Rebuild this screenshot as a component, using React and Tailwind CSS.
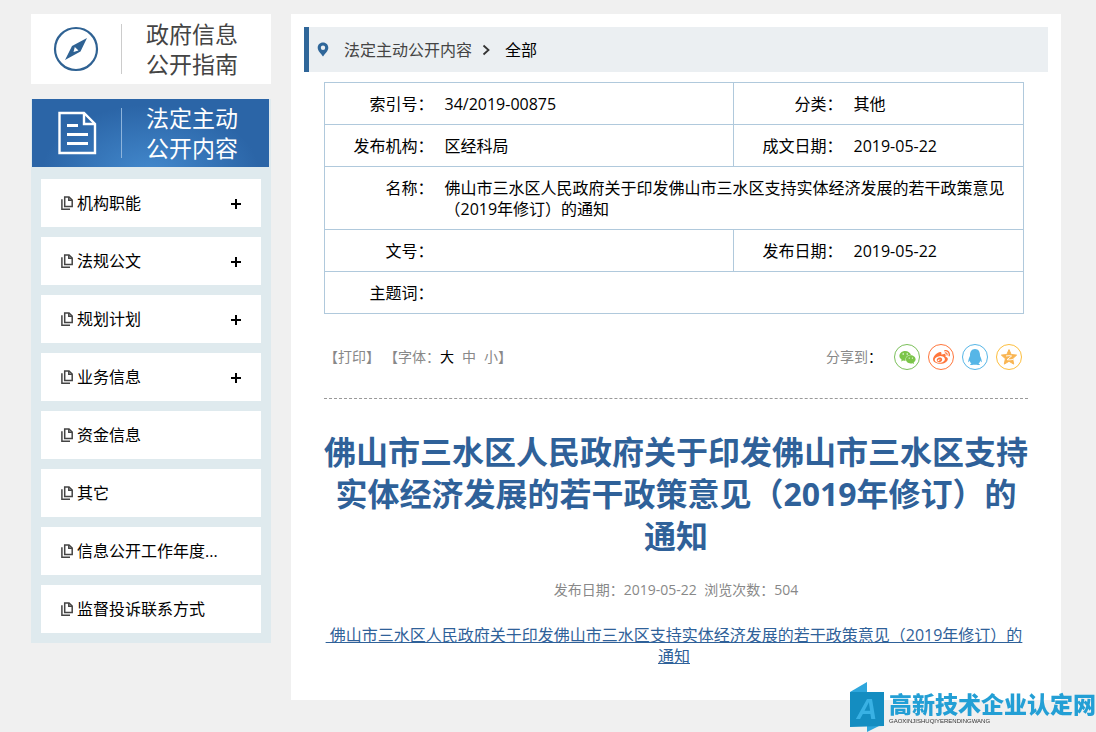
import React, { useState } from 'react';
import { FaWeibo, FaQq, FaWeixin } from 'react-icons/fa';

const MENU = [
  { label: '机构职能', expandable: true },
  { label: '法规公文', expandable: true },
  { label: '规划计划', expandable: true },
  { label: '业务信息', expandable: true },
  { label: '资金信息' },
  { label: '其它' },
  { label: '信息公开工作年度...' },
  { label: '监督投诉联系方式' }
];

const FONT_SIZES = ['大', '中', '小'];

const CompassIcon = () => (
  <svg viewBox="0 0 46 46" className="size-[46px]" fill="none" aria-hidden="true">
    <circle cx="23" cy="23" r="21" stroke="#2f6293" strokeWidth="2.2" />
    <path d="M34 12 L27.500 25.500 L12 34 L19 20 Z M21.800 21 L20.500 26 L25.500 24.500 Z" fill="#2f6293" fillRule="evenodd" />
  </svg>
);

const DocumentIcon = () => (
  <svg viewBox="0 0 40 44" className="h-11 w-10" fill="none" stroke="#fff" strokeWidth="2.4" aria-hidden="true">
    <path d="M2.500 2 H27 L38 13 V42 H2.500 Z" />
    <path d="M27 2 V13 H38" />
    <path d="M10 14.500 H21 M10 23.500 H31 M10 32.500 H31" strokeWidth="2.800" />
  </svg>
);

const FilesIcon = () => (
  <svg viewBox="0 0 12 14" className="h-[14px] w-3 shrink-0" fill="none" stroke="#444" strokeWidth="1.500" aria-hidden="true">
    <path d="M3.700 0.900 H8 L11.200 4 V10.600 H3.700 Z" />
    <path d="M7.800 1 V4.200 H11" />
    <path d="M0.900 3.200 V13.200 H9" />
  </svg>
);

const PinIcon = () => (
  <svg viewBox="0 0 12 15" className="h-[15px] w-3" aria-hidden="true">
    <path d="M6 0.500 C2.800 0.500 0.700 2.800 0.700 5.700 C0.700 9 4 11.500 6 14.500 C8 11.500 11.300 9 11.300 5.700 C11.300 2.800 9.200 0.500 6 0.500 Z M6 3.600 A2.200 2.200 0 1 1 6 8 A2.200 2.200 0 1 1 6 3.600 Z" fill="#2f6699" fillRule="evenodd" />
  </svg>
);

const QzoneIcon = () => (
  <svg viewBox="0 0 16 16" className="size-4" aria-hidden="true">
    <path d="M8 0.600 L10.200 5.500 L15.600 6.100 L11.600 9.700 L12.700 15.100 L8 12.300 L3.300 15.100 L4.400 9.700 L0.400 6.100 L5.800 5.500 Z" fill="#f9b552" stroke="#f9b552" strokeLinejoin="round" />
    <path d="M5 7 Q8 6.300 10.600 7 L6 10.700 Q9 11.200 12 10.400" fill="none" stroke="#fff" strokeWidth="0.900" />
  </svg>
);

const SideCard = ({ icon, lines, active }) => (
  <a
    href="#"
    className={
      active
        ? 'mr-[2px] ml-px flex h-[68px] items-center bg-[#2b65a7] bg-[radial-gradient(ellipse_at_50%_110%,#4389cd_0%,#2b65a7_65%)] text-white'
        : 'flex h-[70px] items-center bg-white pb-px text-[#444]'
    }
  >
    <span className={active ? 'flex w-[89px] justify-center' : 'flex w-[90px] justify-center'}>{icon}</span>
    <span className={active ? 'h-[50px] w-px bg-[#8db4dc]' : 'h-[50px] w-px bg-[#ccc]'} />
    <span className="flex-1 pl-6 text-[23px] leading-[30px]">
      {lines[0]}<br />{lines[1]}
    </span>
  </a>
);

const MenuItem = ({ label, expandable }) => (
  <li className="flex h-12 items-center bg-white px-5">
    <a href="#" className="flex flex-1 items-center gap-1 text-black">
      <FilesIcon />
      {label}
    </a>
    {expandable && (
      <button type="button" aria-label={`展开${label}`} className="cursor-pointer pt-[2px]">
        <svg viewBox="0 0 10 10" className="size-[10px]" stroke="#000" strokeWidth="2" aria-hidden="true">
          <path d="M5 0 V10 M0 5 H10" />
        </svg>
      </button>
    )}
  </li>
);

const Sidebar = () => (
  <aside className="w-60 shrink-0">
    <SideCard icon={<CompassIcon />} lines={['政府信息', '公开指南']} />
    <div className="mt-[15px] bg-[#dfeaee] pb-[10px]">
      <SideCard icon={<DocumentIcon />} lines={['法定主动', '公开内容']} active />
      <ul className="flex flex-col gap-[10px] px-[10px] pt-3">
        {MENU.map(item => <MenuItem key={item.label} {...item} />)}
      </ul>
    </div>
  </aside>
);

const Label = ({ children }) => (
  <th scope="row" className="pt-[11px] pr-[3px] pb-[9px] text-right align-top font-normal">{children}</th>
);

const Value = ({ children, colSpan, last }) => (
  <td colSpan={colSpan} className={last ? 'pt-[11px] pb-[9px] pl-2 align-top' : 'border-r border-[#b0c9dc] pt-[11px] pb-[9px] pl-2 align-top'}>
    {children}
  </td>
);

const InfoTable = () => (
  <table className="w-full table-fixed border-collapse border border-[#b0c9dc] leading-[21px] text-black">
    <colgroup>
      <col className="w-28" />
      <col />
      <col className="w-28" />
      <col className="w-[178px]" />
    </colgroup>
    <tbody className="divide-y divide-[#b0c9dc]">
      <tr>
        <Label>索引号：</Label>
        <Value>34/2019-00875</Value>
        <Label>分类：</Label>
        <Value last>其他</Value>
      </tr>
      <tr>
        <Label>发布机构：</Label>
        <Value>区经科局</Value>
        <Label>成文日期：</Label>
        <Value last>2019-05-22</Value>
      </tr>
      <tr>
        <Label>名称：</Label>
        <Value colSpan={3} last>佛山市三水区人民政府关于印发佛山市三水区支持实体经济发展的若干政策意见（2019年修订）的通知</Value>
      </tr>
      <tr>
        <Label>文号：</Label>
        <Value />
        <Label>发布日期：</Label>
        <Value last>2019-05-22</Value>
      </tr>
      <tr>
        <Label>主题词：</Label>
        <Value colSpan={3} last />
      </tr>
    </tbody>
  </table>
);

const Toolbar = () => {
  const [size, setSize] = useState('大');

  return (
    <div className="mt-[30px] flex items-center justify-between border-b border-dashed border-[#999] pr-[6px] pb-7 text-sm text-[#888]">
      <div className="flex">
        <button type="button" className="cursor-pointer">【打印】</button>
        <span className="ml-1">【字体：</span>
        <span className="flex gap-2">
          {FONT_SIZES.map(name => (
            <button
              key={name}
              type="button"
              onClick={() => setSize(name)}
              className={size === name ? 'cursor-pointer text-black' : 'cursor-pointer'}
            >
              {name}
            </button>
          ))}
        </span>
        <span>】</span>
      </div>
      <div className="flex items-center gap-2">
        <span className="mr-1">分享到<span className="text-black">：</span></span>
        <a href="#" aria-label="微信" className="flex size-[26px] items-center justify-center rounded-full border border-[#7bc05a] text-[#7bc549]">
          <FaWeixin size={17} />
        </a>
        <a href="#" aria-label="微博" className="flex size-[26px] items-center justify-center rounded-full border border-[#ff763b] text-[#ff763b]">
          <FaWeibo size={17} />
        </a>
        <a href="#" aria-label="QQ" className="flex size-[26px] items-center justify-center rounded-full border border-[#56b6e7] text-[#56b6e7]">
          <FaQq size={16} />
        </a>
        <a href="#" aria-label="QQ空间" className="flex size-[26px] items-center justify-center rounded-full border border-[#fdbe3d]">
          <QzoneIcon />
        </a>
      </div>
    </div>
  );
};

const SiteMark = () => (
  <div className="fixed right-0 bottom-0 flex items-center text-[#239fd5]">
    <svg viewBox="0 0 36 50" className="h-[50px] w-9" aria-hidden="true">
      <path d="M17 44 H29 L17 50 Z" fill="#2ea6dc" />
      <path d="M0 10 H34 V44 L0 45 Z" fill="#148dc1" />
      <path d="M0 10 L17 0 V10 Z" fill="#2ea6dc" />
      <text x="17" y="37" textAnchor="middle" fontFamily="Liberation Sans" fontSize="29" fontWeight="bold" fontStyle="italic" fill="#39b1e4">A</text>
    </svg>
    <div className="pl-[3px]">
      <div className="text-[23px] leading-[27px] font-black">高新技术企业认定网</div>
      <div className="font-['Liberation_Sans'] text-[6px] leading-[6px] text-[#333]">GAOXINJISHUQIYERENDINGWANG</div>
    </div>
  </div>
);

const App = () => (
  <div className="min-h-screen bg-[#f0f0f0] pt-[14px] pr-[35px] pb-8 pl-[31px] font-['Open_Sans','Noto_Sans_CJK_SC',sans-serif] text-base" lang="zh-CN">
    <div className="flex items-start gap-5">
      <Sidebar />
      <main className="min-w-0 flex-1 bg-white pt-[13px] pb-[33px]">
        <nav className="mx-[13px] flex h-[45px] items-center border-l-[5px] border-[#2f6699] bg-[#ebeff2] pl-2">
          <PinIcon />
          <a href="#" className="ml-[15px] text-[#444]">法定主动公开内容</a>
          <svg viewBox="0 0 8 12" className="ml-[10px] h-3 w-2" fill="none" stroke="#333" strokeWidth="1.800" aria-hidden="true">
            <path d="M1.500 1.500 L6.500 6 L1.500 10.500" />
          </svg>
          <a href="#" className="ml-[15px] text-black">全部</a>
        </nav>
        <div className="px-[33px] pt-[10px]">
          <div className="mr-1">
            <InfoTable />
          </div>
          <Toolbar />
          <article className="text-center">
            <h1 className="mt-8 text-[32px] leading-[42px] font-bold text-[#2f6199]">
              佛山市三水区人民政府关于印发佛山市三水区支持实体经济发展的若干政策意见（2019年修订）的通知
            </h1>
            <p className="mt-[22px] text-sm leading-[21px] text-[#888]">发布日期：2019-05-22&nbsp; 浏览次数：504</p>
            <p className="mt-[25px] mr-1 leading-[21px]">
              <a href="#" className="text-[#2f6199] underline">&nbsp;佛山市三水区人民政府关于印发佛山市三水区支持实体经济发展的若干政策意见（2019年修订）的通知</a>
            </p>
          </article>
        </div>
      </main>
    </div>
    <SiteMark />
  </div>
);

export default App;
